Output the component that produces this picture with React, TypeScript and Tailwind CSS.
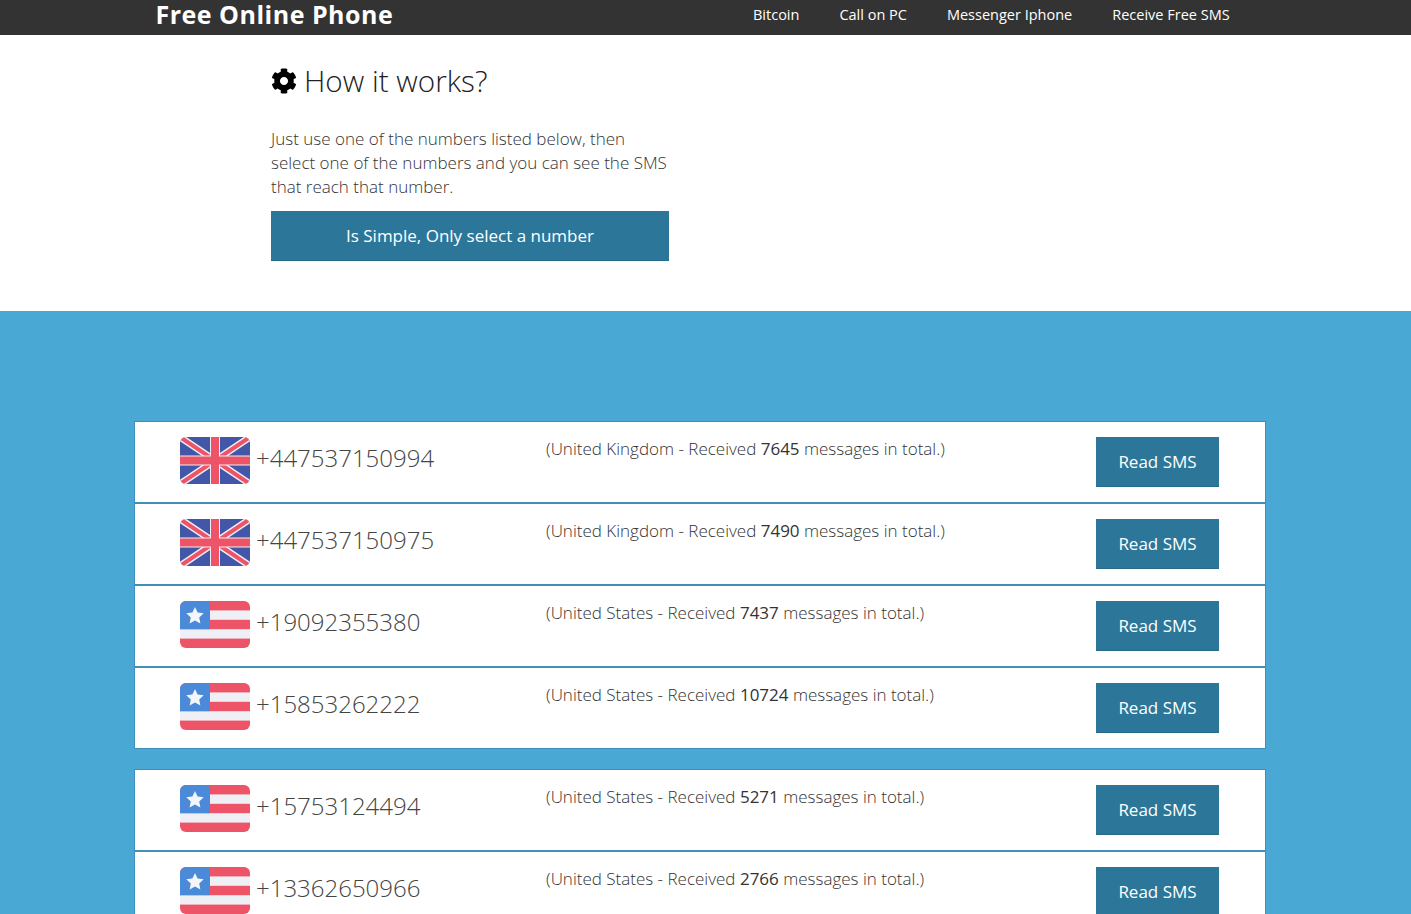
import React from 'react';

const font = "font-['Open_Sans','Liberation_Sans',sans-serif]";

const navLinks = ['Bitcoin', 'Call on PC', 'Messenger Iphone', 'Receive Free SMS'];

type Row = { phone: string; country: 'uk' | 'us'; count: number };

const firstGroup: Row[] = [
  { phone: '+447537150994', country: 'uk', count: 7645 },
  { phone: '+447537150975', country: 'uk', count: 7490 },
  { phone: '+19092355380', country: 'us', count: 7437 },
  { phone: '+15853262222', country: 'us', count: 10724 },
];

const secondGroup: Row[] = [
  { phone: '+15753124494', country: 'us', count: 5271 },
  { phone: '+13362650966', country: 'us', count: 2766 },
];

const UkFlag = () => (
  <svg width="70" height="47" viewBox="0 0 70 47" className="shrink-0">
    <defs>
      <clipPath id="uk-clip">
        <rect width="70" height="47" rx="6" />
      </clipPath>
    </defs>
    <g clipPath="url(#uk-clip)">
      <rect width="70" height="47" fill="#4257a8" />
      <path d="M0 0L70 47M70 0L0 47" stroke="#f0eef2" strokeWidth="7" />
      <path d="M0 0L70 47M70 0L0 47" stroke="#ee5468" strokeWidth="4" />
      <rect x="30" width="10" height="47" fill="#f0eef2" />
      <rect y="18.5" width="70" height="10" fill="#f0eef2" />
      <rect x="31" width="8" height="47" fill="#ee5468" />
      <rect y="19.5" width="70" height="8" fill="#ee5468" />
    </g>
  </svg>
);

const UsFlag = () => (
  <svg width="70" height="47" viewBox="0 0 70 47" className="shrink-0">
    <defs>
      <clipPath id="us-clip">
        <rect width="70" height="47" rx="6" />
      </clipPath>
    </defs>
    <g clipPath="url(#us-clip)">
      <rect width="70" height="47" fill="#eef0f6" />
      <rect y="0" width="70" height="9.4" fill="#ee5468" />
      <rect y="18.8" width="70" height="9.4" fill="#ee5468" />
      <rect y="37.6" width="70" height="9.4" fill="#ee5468" />
      <rect width="30" height="28.2" fill="#4a8ad8" />
      <path
        d="M15 6l2.6 5.6 6.1.7-4.5 4.2 1.2 6-5.4-3-5.4 3 1.2-6-4.5-4.2 6.1-.7z"
        fill="#f4f6fa"
      />
    </g>
  </svg>
);

const NumberRow = ({ row, last }: { row: Row; last: boolean }) => (
  <div className={`flex items-start bg-white pl-[45px] ${last ? 'h-[80px]' : 'h-[82px] border-b-2 border-[#3f8fb8]'}`}>
    <div className="mt-[15px]">{row.country === 'uk' ? <UkFlag /> : <UsFlag />}</div>
    <div className="mt-[17px] ml-[6px] w-[290px] text-2xl leading-[38px] font-light text-[#444]">{row.phone}</div>
    <div className="mt-[15px] w-[550px] text-[17px] leading-6 font-light text-[#333]">
      ({row.country === 'uk' ? 'United Kingdom' : 'United States'} - Received{' '}
      <span className="font-normal">{row.count}</span> messages in total.)
    </div>
    <button className="mt-[15px] flex h-[50px] w-[123px] items-center justify-center border-b border-[#276b8a] bg-[#2c7799] text-[17px] text-white">
      Read SMS
    </button>
  </div>
);

const Group = ({ rows }: { rows: Row[] }) => (
  <div className="border border-[#3f8fb8] bg-white">
    {rows.map((row, idx) => (
      <NumberRow key={row.phone} row={row} last={idx === rows.length - 1} />
    ))}
  </div>
);

export default function App() {
  return (
    <div className={`h-[914px] overflow-hidden bg-white antialiased ${font}`}>
      <nav className="flex h-[35px] items-start bg-[#333333] pl-[155.5px] text-white">
        <div className="w-[597.5px] text-[25px] leading-[29px] font-bold tracking-[0.5px]">Free Online Phone</div>
        <div className="flex gap-10 pt-[5px]">
          {navLinks.map((link) => (
            <a key={link} className="text-[14.5px] leading-5">
              {link}
            </a>
          ))}
        </div>
      </nav>

      <section className="h-[276px] pt-[25px] pl-[271px]">
        <h2 className="flex items-center gap-[7px] text-[29.7px] leading-[42px] font-light text-[#222]">
          <svg width="26" height="26" viewBox="0 0 512 512" fill="#000">
            <path d="M487.4 315.7l-42.6-24.6c4.3-23.2 4.3-47 0-70.2l42.6-24.6c4.9-2.8 7.1-8.6 5.5-14-11.1-35.6-30-67.8-54.7-94.6-3.8-4.1-10-5.1-14.8-2.3L380.8 110c-17.9-15.4-38.5-27.3-60.8-35.1V25.8c0-5.6-3.9-10.5-9.4-11.7-36.7-8.2-74.3-7.8-109.2 0-5.5 1.2-9.4 6.1-9.4 11.7V75c-22.2 7.9-42.8 19.8-60.8 35.1L88.7 85.5c-4.9-2.8-11-1.9-14.8 2.3-24.7 26.7-43.6 58.9-54.7 94.6-1.7 5.4.6 11.2 5.5 14L67.3 221c-4.3 23.2-4.3 47 0 70.2l-42.6 24.6c-4.9 2.8-7.1 8.6-5.5 14 11.1 35.6 30 67.8 54.7 94.6 3.8 4.1 10 5.1 14.8 2.3l42.6-24.6c17.9 15.4 38.5 27.3 60.8 35.1v49.2c0 5.6 3.9 10.5 9.4 11.7 36.7 8.2 74.3 7.8 109.2 0 5.5-1.2 9.4-6.1 9.4-11.7v-49.2c22.2-7.9 42.8-19.8 60.8-35.1l42.6 24.6c4.9 2.8 11 1.9 14.8-2.3 24.7-26.7 43.6-58.9 54.7-94.6 1.5-5.5-.7-11.3-5.6-14.1zM256 336c-44.1 0-80-35.9-80-80s35.9-80 80-80 80 35.9 80 80-35.9 80-80 80z" />
          </svg>
          How it works?
        </h2>
        <p className="mt-[25px] w-[400px] text-[17px] leading-6 font-light text-[#333]">
          Just use one of the numbers listed below, then select one of the numbers and you can see the SMS that reach
          that number.
        </p>
        <button className="mt-3 flex h-[50px] w-[398px] items-center justify-center border-b border-[#276b8a] bg-[#2c7799] text-[17px] text-white">
          Is Simple, Only select a number
        </button>
      </section>

      <section className="flex h-[603px] flex-col gap-5 bg-[#4aa8d4] pt-[110px] pl-[134px]">
        <div className="w-[1132px]">
          <Group rows={firstGroup} />
        </div>
        <div className="w-[1132px]">
          <Group rows={secondGroup} />
        </div>
      </section>
    </div>
  );
}
